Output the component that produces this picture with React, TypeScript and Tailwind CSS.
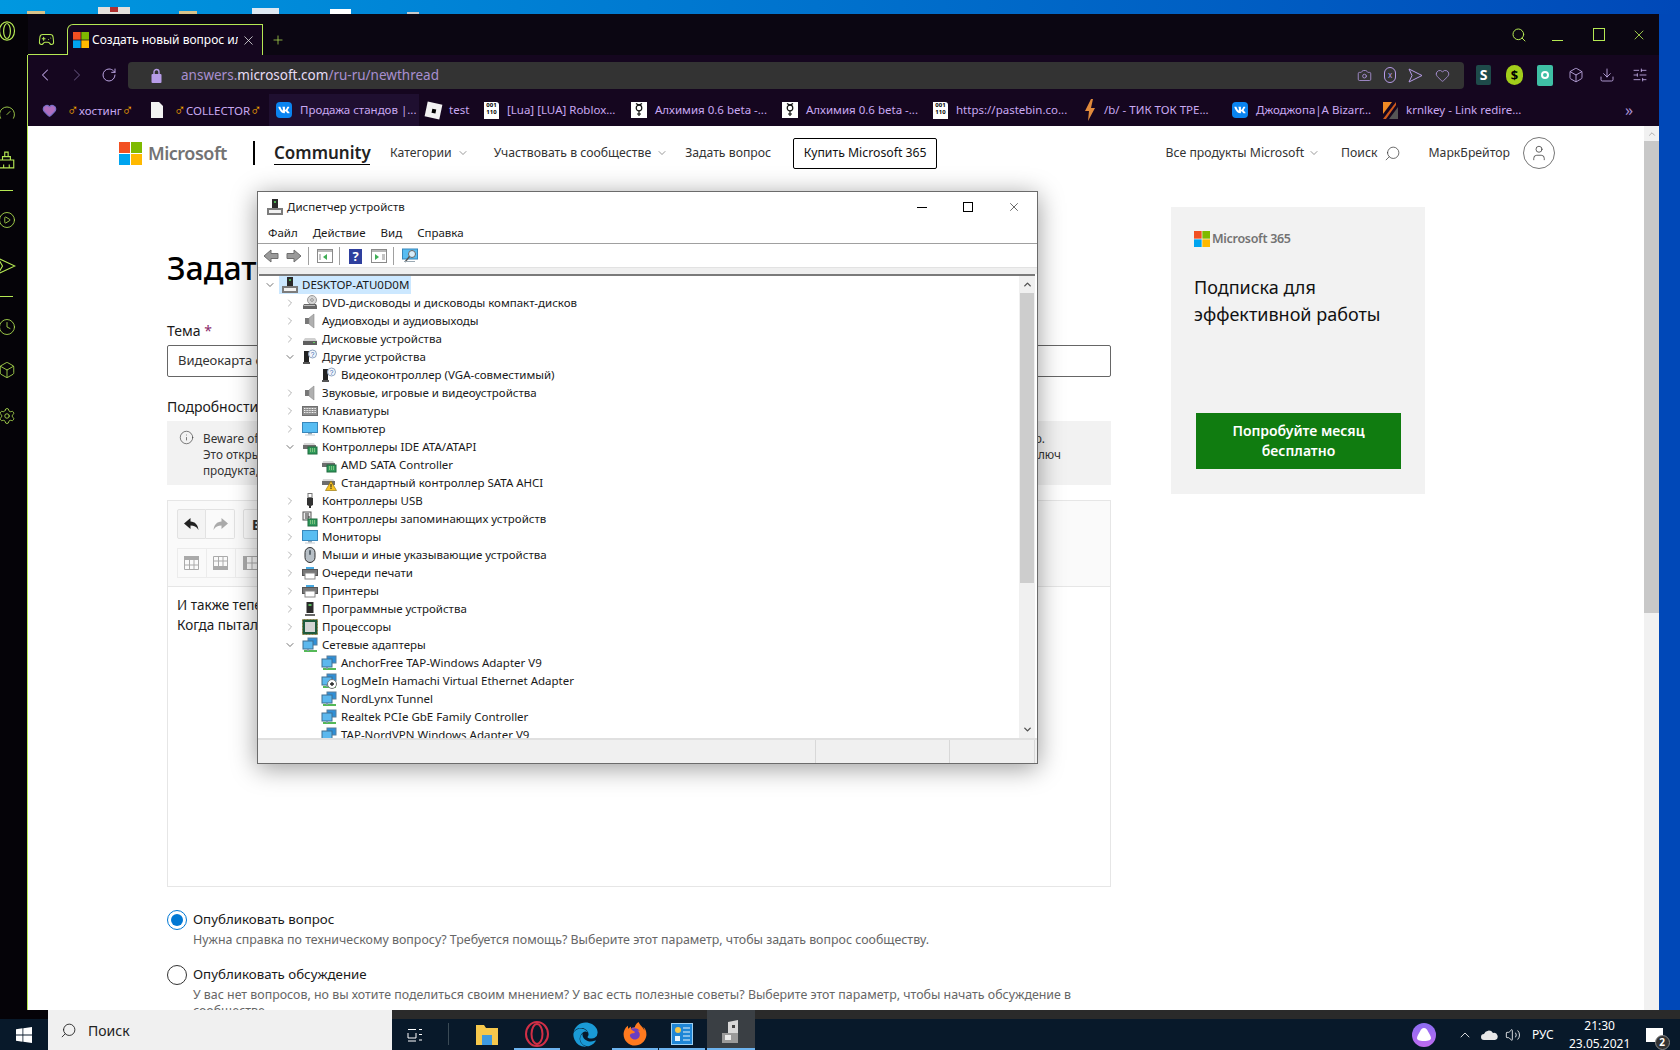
import React from 'react';
import { ChevronDown, ChevronLeft, ChevronRight, ChevronUp, Download, Gamepad2, Plus, RotateCw, Search, SlidersHorizontal, User, Volume2, X, Box, Camera, Heart, Info, Clock, Settings, Gauge, CirclePlay } from 'lucide-react';
import { FaEdge, FaFirefoxBrowser, FaVk } from 'react-icons/fa';

const MsLogo = ({ size }: { size: number }) => (
  <svg width={size} height={size} viewBox="0 0 23 23" className="shrink-0">
    <rect x="0" y="0" width="11" height="11" fill="#f25022" />
    <rect x="12" y="0" width="11" height="11" fill="#7fba00" />
    <rect x="0" y="12" width="11" height="11" fill="#00a4ef" />
    <rect x="12" y="12" width="11" height="11" fill="#ffb900" />
  </svg>
);

const DevIcon = ({ kind }: { kind: string }) => {
  const tower = (
    <>
      <rect x="5" y="0" width="6" height="9" fill="#2b2b2b" />
      <rect x="7" y="2" width="2" height="2" fill="#4caf50" />
      <path d="M0 9h16v7H0z" fill="#7c7c7c" />
      <rect x="2" y="11" width="12" height="3" fill="#f2f2f2" />
    </>
  );
  const unknown = (
    <>
      <rect x="2" y="2" width="5" height="11" fill="#222" />
      <rect x="1" y="13" width="7" height="2" fill="#555" />
      <circle cx="10.5" cy="5" r="4" fill="#f4f7fb" stroke="#8fa6c4" />
      <text x="10.5" y="7.5" fontSize="6.5" textAnchor="middle" fill="#2a62b0" fontFamily="Liberation Sans">?</text>
    </>
  );
  const drive = (
    <>
      <path d="M2 4h10l2 3H1z" fill="#d8d8d8" />
      <rect x="1" y="6" width="13" height="4" fill="#6d6d6d" />
    </>
  );
  const net = (
    <>
      <rect x="6" y="1" width="9" height="7" fill="#2f8fd6" stroke="#5a7f9c" />
      <rect x="1" y="4" width="10" height="8" fill="#5cb8ee" stroke="#3f6f91" />
      <rect x="2" y="13" width="13" height="2" fill="#55b957" />
      <rect x="5" y="12" width="2" height="2" fill="#7d9aa8" />
    </>
  );
  switch (kind) {
    case 'root':
      return <svg width="16" height="16" viewBox="0 0 16 16" className="shrink-0">{tower}</svg>;
    case 'dvd':
      return (
        <svg width="16" height="16" viewBox="0 0 16 16" className="shrink-0">
          <circle cx="10" cy="5" r="4.5" fill="#d6d6d6" stroke="#9a9a9a" />
          <circle cx="10" cy="5" r="1.3" fill="#fff" stroke="#888" />
          <path d="M2 9h12l1 2v3H1v-3z" fill="#666" />
          <rect x="2" y="10" width="11" height="1" fill="#bdbdbd" />
        </svg>
      );
    case 'audio':
      return (
        <svg width="16" height="16" viewBox="0 0 16 16" className="shrink-0">
          <rect x="3" y="5" width="4" height="6" fill="#777" />
          <path d="M7 5l5-4v14l-5-4z" fill="#b0b0b0" stroke="#8a8a8a" strokeWidth=".6" />
        </svg>
      );
    case 'disk':
      return (
        <svg width="16" height="16" viewBox="0 0 16 16" className="shrink-0">
          <path d="M3 7h10l2 3H1z" fill="#d0d0d0" />
          <rect x="1" y="10" width="14" height="4" fill="#5f5f5f" />
          <rect x="11" y="11" width="2" height="1" fill="#63d063" />
        </svg>
      );
    case 'unknown':
      return <svg width="16" height="16" viewBox="0 0 16 16" className="shrink-0">{unknown}</svg>;
    case 'keyboard':
      return (
        <svg width="16" height="16" viewBox="0 0 16 16" className="shrink-0">
          <rect x="0.5" y="3.5" width="15" height="9" fill="#8f8f8f" stroke="#6f6f6f" />
          <path d="M2 5.5h12M2 7.5h12M2 9.5h12" stroke="#f4f4f4" strokeDasharray="1 .6" />
        </svg>
      );
    case 'monitor':
      return (
        <svg width="16" height="16" viewBox="0 0 16 16" className="shrink-0">
          <rect x="0.5" y="1.5" width="15" height="10" fill="#58bdf2" stroke="#3887bb" />
          <rect x="6" y="12" width="4" height="1.5" fill="#9ba9b3" />
          <rect x="3" y="13.5" width="10" height="1" fill="#c2ccd3" />
        </svg>
      );
    case 'ide':
      return (
        <svg width="16" height="16" viewBox="0 0 16 16" className="shrink-0">
          {drive}
          <rect x="6" y="8" width="9" height="7" fill="#2f9a5b" stroke="#1f6a3e" />
          <path d="M8 10h5M8 12h5" stroke="#c9e8a0" strokeDasharray="1 1" />
        </svg>
      );
    case 'warn':
      return (
        <svg width="16" height="16" viewBox="0 0 16 16" className="shrink-0">
          {drive}
          <path d="M10 6l5.5 9.5h-11z" fill="#f7c325" stroke="#8a6a00" strokeWidth=".6" />
          <rect x="9.5" y="9" width="1" height="3.5" fill="#222" />
          <rect x="9.5" y="13" width="1" height="1" fill="#222" />
        </svg>
      );
    case 'usb':
      return (
        <svg width="16" height="16" viewBox="0 0 16 16" className="shrink-0">
          <rect x="6" y="0.5" width="4" height="4" fill="#fff" stroke="#777" />
          <path d="M5 5h6v7l-2 1v2H7v-2l-2-1z" fill="#333" />
        </svg>
      );
    case 'storage':
      return (
        <svg width="16" height="16" viewBox="0 0 16 16" className="shrink-0">
          <rect x="1" y="1" width="8" height="8" fill="#eee" stroke="#555" />
          <path d="M3 3h4M3 5h4v2H3" stroke="#333" fill="none" />
          <rect x="6" y="8" width="9" height="7" fill="#2f9a5b" stroke="#1f6a3e" />
          <path d="M8 10h5M8 12h5" stroke="#c9e8a0" strokeDasharray="1 1" />
        </svg>
      );
    case 'mouse':
      return (
        <svg width="16" height="16" viewBox="0 0 16 16" className="shrink-0">
          <rect x="3" y="0.5" width="10" height="15" rx="5" fill="#b7bfc6" stroke="#2f2f2f" />
          <rect x="7" y="3" width="2" height="5" rx="1" fill="#5c6870" />
        </svg>
      );
    case 'printer':
      return (
        <svg width="16" height="16" viewBox="0 0 16 16" className="shrink-0">
          <rect x="4" y="2" width="8" height="3" fill="#46a8e0" />
          <rect x="0.5" y="4.5" width="15" height="6" fill="#777" stroke="#555" />
          <rect x="3" y="8" width="10" height="6" fill="#fff" stroke="#888" />
        </svg>
      );
    case 'software':
      return (
        <svg width="16" height="16" viewBox="0 0 16 16" className="shrink-0">
          <rect x="4.5" y="1" width="7" height="11" fill="#2a2a2a" />
          <rect x="6.5" y="3" width="3" height="2" fill="#57b95c" />
          <rect x="3" y="13" width="10" height="2" fill="#666" />
        </svg>
      );
    case 'cpu':
      return (
        <svg width="16" height="16" viewBox="0 0 16 16" className="shrink-0">
          <rect x="0.5" y="0.5" width="15" height="15" fill="#1f5a3c" stroke="#8a7f40" strokeDasharray="1 .5" />
          <rect x="3" y="3" width="10" height="10" fill="#d4d4d4" />
        </svg>
      );
    case 'net':
      return <svg width="16" height="16" viewBox="0 0 16 16" className="shrink-0">{net}</svg>;
    case 'hamachi':
      return (
        <svg width="16" height="16" viewBox="0 0 16 16" className="shrink-0">
          {net}
          <circle cx="11" cy="11" r="4.5" fill="#fff" stroke="#777" />
          <path d="M9 11h4M11 9v4" stroke="#222" strokeWidth="1.3" />
        </svg>
      );
    default:
      return null;
  }
};

const treeRows = [
  { level: 1, open: false, icon: 'dvd', text: 'DVD-дисководы и дисководы компакт-дисков' },
  { level: 1, open: false, icon: 'audio', text: 'Аудиовходы и аудиовыходы' },
  { level: 1, open: false, icon: 'disk', text: 'Дисковые устройства' },
  { level: 1, open: true, icon: 'unknown', text: 'Другие устройства' },
  { level: 2, open: false, icon: 'unknown', text: 'Видеоконтроллер (VGA-совместимый)' },
  { level: 1, open: false, icon: 'audio', text: 'Звуковые, игровые и видеоустройства' },
  { level: 1, open: false, icon: 'keyboard', text: 'Клавиатуры' },
  { level: 1, open: false, icon: 'monitor', text: 'Компьютер' },
  { level: 1, open: true, icon: 'ide', text: 'Контроллеры IDE ATA/ATAPI' },
  { level: 2, open: false, icon: 'ide', text: 'AMD SATA Controller' },
  { level: 2, open: false, icon: 'warn', text: 'Стандартный контроллер SATA AHCI' },
  { level: 1, open: false, icon: 'usb', text: 'Контроллеры USB' },
  { level: 1, open: false, icon: 'storage', text: 'Контроллеры запоминающих устройств' },
  { level: 1, open: false, icon: 'monitor', text: 'Мониторы' },
  { level: 1, open: false, icon: 'mouse', text: 'Мыши и иные указывающие устройства' },
  { level: 1, open: false, icon: 'printer', text: 'Очереди печати' },
  { level: 1, open: false, icon: 'printer', text: 'Принтеры' },
  { level: 1, open: false, icon: 'software', text: 'Программные устройства' },
  { level: 1, open: false, icon: 'cpu', text: 'Процессоры' },
  { level: 1, open: true, icon: 'net', text: 'Сетевые адаптеры' },
  { level: 2, open: false, icon: 'net', text: 'AnchorFree TAP-Windows Adapter V9' },
  { level: 2, open: false, icon: 'hamachi', text: 'LogMeIn Hamachi Virtual Ethernet Adapter' },
  { level: 2, open: false, icon: 'net', text: 'NordLynx Tunnel' },
  { level: 2, open: false, icon: 'net', text: 'Realtek PCIe GbE Family Controller' },
  { level: 2, open: false, icon: 'net', text: 'TAP-NordVPN Windows Adapter V9' },
];

const DeviceManager = () => (
  <div className="absolute left-[257px] top-[191px] w-[781px] h-[573px] flex flex-col bg-white border border-[#6b6b6b] shadow-[0_4px_24px_rgba(0,0,0,0.4)] text-[11.5px] text-[#1a1a1a]">
    <div className="h-[30px] flex items-center shrink-0 pl-[9px]">
      <DevIcon kind="root" />
      <span className="ml-[4px]">Диспетчер устройств</span>
      <div className="ml-auto flex items-center h-full">
        <div className="w-[46px] flex justify-center"><div className="w-[10px] h-px bg-black" /></div>
        <div className="w-[46px] flex justify-center"><div className="w-[10px] h-[10px] border border-black" /></div>
        <div className="w-[46px] flex justify-center"><X size={14} strokeWidth={1} color="#000" /></div>
      </div>
    </div>
    <div className="h-[22px] flex items-center gap-[15px] pl-[10px] shrink-0 border-b border-[#a0a0a0]">
      <span>Файл</span>
      <span>Действие</span>
      <span>Вид</span>
      <span>Справка</span>
    </div>
    <div className="h-[23px] flex items-center shrink-0 pl-[5px] pt-px">
      <svg width="16" height="14" viewBox="0 0 16 14"><path d="M8 1L1 7l7 6V9.5h7v-5H8z" fill="#9a9a9a" stroke="#6e6e6e" /></svg>
      <svg width="16" height="14" viewBox="0 0 16 14" className="ml-[7px]"><path d="M8 1l7 6-7 6V9.5H1v-5h7z" fill="#9a9a9a" stroke="#6e6e6e" /></svg>
      <div className="w-px h-[18px] bg-[#a0a0a0] ml-[6px]" />
      <svg width="16" height="14" viewBox="0 0 16 14" className="ml-[8px]"><rect x=".5" y=".5" width="15" height="13" fill="#fff" stroke="#8a8a8a" /><rect x="1" y="1" width="14" height="2" fill="#b8b8b8" /><path d="M10 5L6 8l4 3z" fill="#3fae55" /><path d="M2 6h2M2 8h2M2 10h2" stroke="#888" /></svg>
      <div className="w-px h-[18px] bg-[#a0a0a0] ml-[6px]" />
      <div className="ml-[9px] w-[13px] h-[15px] bg-[#2e3f9e] flex items-center justify-center text-white text-[13px] font-bold leading-none">?</div>
      <svg width="16" height="14" viewBox="0 0 16 14" className="ml-[9px]"><rect x=".5" y=".5" width="15" height="13" fill="#fff" stroke="#8a8a8a" /><rect x="1" y="1" width="14" height="2" fill="#b8b8b8" /><path d="M4 5l4 3-4 3z" fill="#3fae55" /><path d="M11 6h3M11 8h3M11 10h3" stroke="#888" /></svg>
      <div className="w-px h-[18px] bg-[#a0a0a0] ml-[6px]" />
      <svg width="16" height="16" viewBox="0 0 16 16" className="ml-[8px]"><rect x=".5" y="1" width="15" height="10" fill="#58bdf2" stroke="#3887bb" /><circle cx="10" cy="6" r="3.5" fill="#d8eefb" stroke="#666" /><path d="M7.5 8.5L3 14" stroke="#555" strokeWidth="1.4" /><rect x="2" y="13" width="11" height="1" fill="#9ba9b3" /></svg>
    </div>
    <div className="h-[7px] shrink-0 bg-[#efefef] border-t border-[#e2e2e2]" />
    <div className="flex-1 min-h-0 flex ml-px mr-[2px] border-t-2 border-[#7a7a7a] overflow-hidden">
      <div className="flex-1 overflow-hidden">
        <div className="h-[18px] flex items-center pl-[5px]">
          <ChevronDown size={12} strokeWidth={1.5} color="#444" />
          <div className="ml-[3px] h-[18px] w-[132px] bg-[#cce8ff] flex items-center pl-[3px]">
            <DevIcon kind="root" />
            <span className="ml-[4px] whitespace-nowrap">DESKTOP-ATU0D0M</span>
          </div>
        </div>
        {treeRows.map((row) => (
          <div key={row.text} className={row.level === 2 ? 'h-[18px] flex items-center pl-[62px]' : 'h-[18px] flex items-center pl-[25px]'}>
            {row.level === 1 && (row.open
              ? <ChevronDown size={12} strokeWidth={1.5} color="#444" />
              : <ChevronRight size={12} strokeWidth={1.5} color="#999" />)}
            {row.level === 1 && <div className="w-[6px]" />}
            <DevIcon kind={row.icon} />
            <span className="ml-[4px] whitespace-nowrap">{row.text}</span>
          </div>
        ))}
      </div>
      <div className="w-[16px] shrink-0 bg-[#f0f0f0] flex flex-col">
        <div className="h-[17px] flex items-center justify-center"><ChevronUp size={11} strokeWidth={3} color="#505050" /></div>
        <div className="h-[290px] mx-px bg-[#cdcdcd]" />
        <div className="mt-auto h-[17px] flex items-center justify-center"><ChevronDown size={11} strokeWidth={3} color="#505050" /></div>
      </div>
    </div>
    <div className="h-[25px] shrink-0 bg-[#f0f0f0] border-t-2 border-[#e0e0e0] flex">
      <div className="w-[558px] border-r border-[#d8d8d8]" />
      <div className="w-[134px] border-r border-[#d8d8d8]" />
      <div className="w-[85px] border-r border-[#d8d8d8]" />
    </div>
  </div>
);

const Vk = () => (
  <div className="w-[16px] h-[16px] rounded-[4px] bg-[#0a84f0] flex items-center justify-center text-white shrink-0">
    <FaVk size={12} />
  </div>
);

const Alch = () => (
  <div className="w-[16px] h-[16px] bg-white flex items-center justify-center shrink-0">
    <svg width="10" height="14" viewBox="0 0 10 14" fill="none" stroke="#111" strokeWidth="1.2">
      <circle cx="5" cy="5" r="2.8" /><path d="M2 .5q3 2.5 6 0M5 8v5M3 11h4" />
    </svg>
  </div>
);

const Bin = () => (
  <div className="w-[15px] h-[17px] bg-white text-[6px] leading-[7px] text-black font-bold text-center shrink-0 rounded-tr-[3px]">
    001<br />110
  </div>
);

const Mars = () => <span className="text-[#f5a800] font-bold text-[16px] leading-none">♂</span>;

const bookmarkText = 'text-[#c9a9f2] whitespace-nowrap ml-[8px]';

const Bookmarks = () => (
  <div className="h-[32px] flex items-center bg-[#15061f] text-[11.5px] pl-[14px] shrink-0">
    <Heart size={15} fill="#b06fc0" color="#7a6fc8" className="w-[15px] shrink-0" />
    <div className="ml-[10px] w-[68px] whitespace-nowrap text-[#c9a9f2]"><Mars />хостинг<Mars /></div>
    <svg width="12" height="16" viewBox="0 0 12 16" className="ml-[16px] shrink-0"><path d="M0 0h8l4 4v12H0z" fill="#f2f2f2" /></svg>
    <div className="ml-[11px] w-[93px] whitespace-nowrap text-[#c9a9f2]"><Mars />COLLECTOR<Mars /></div>
    <div className="w-[150px] h-[32px] bg-[#1f0f30] flex items-center pl-[7px] ml-[2px]">
      <Vk />
      <span className={bookmarkText}>Продажа стандов |...</span>
    </div>
    <div className="w-[15px] h-[15px] bg-[#f2f2f2] rotate-12 ml-[7px] flex items-center justify-center shrink-0"><div className="w-[4px] h-[4px] bg-black" /></div>
    <span className={bookmarkText + ' w-[27px]'}>test</span>
    <div className="w-[15px] ml-[8px] shrink-0"><Bin /></div>
    <span className={bookmarkText + ' w-[124px]'}>[Lua] [LUA] Roblox...</span>
    <Alch />
    <span className={bookmarkText + ' w-[127px]'}>Алхимия 0.6 beta -...</span>
    <Alch />
    <span className={bookmarkText + ' w-[127px]'}>Алхимия 0.6 beta -...</span>
    <Bin />
    <span className={bookmarkText + ' w-[128px]'}>https://pastebin.co...</span>
    <svg width="12" height="22" viewBox="0 0 12 22" className="shrink-0"><path d="M7 0L1 12h4l-1 10 7-13H7l2-9z" fill="#e08a3c" /></svg>
    <span className={bookmarkText + ' w-[128px]'}>/b/ - ТИК ТОК ТРЕ...</span>
    <Vk />
    <span className={bookmarkText + ' w-[127px]'}>Джоджопа|A Bizarr...</span>
    <svg width="15" height="17" viewBox="0 0 15 17" className="shrink-0"><path d="M0 0h9L0 12z" fill="#f08a24" /><path d="M13 0v3L3 17H0z" fill="#d05a1c" /><path d="M6 17l9-12v12z" fill="#555" /></svg>
    <span className={bookmarkText + ' w-[219px]'}>krnlkey - Link redire...</span>
    <span className="text-[#a88fd0] text-[16px] leading-none">»</span>
  </div>
);

const AddressBar = () => (
  <div className="h-[39px] flex items-center bg-[#15061f] shrink-0 pt-px">
    <ChevronLeft size={20} strokeWidth={1.25} color="#b9a2e0" className="ml-[7px]" />
    <ChevronRight size={20} strokeWidth={1.25} color="#5b4a72" className="ml-[12px]" />
    <RotateCw size={16} strokeWidth={1.5} color="#b9a2e0" className="ml-[14px]" />
    <div className="ml-[11px] w-[1336px] h-[27px] rounded-[4px] bg-[#333] flex items-center">
      <svg width="11" height="15" viewBox="0 0 11 15" className="ml-[23px] shrink-0"><path d="M3 7V4a2.5 2.5 0 015 0v3" fill="none" stroke="#b79ce8" strokeWidth="1.4" /><rect x="0.5" y="6" width="10" height="9" rx="1" fill="#b79ce8" /></svg>
      <div className="ml-[19px] text-[13.5px] text-[#a88fd0] whitespace-nowrap">
        answers.<span className="text-[#e6dcf5]">microsoft.com</span>/ru-ru/newthread
      </div>
      <div className="ml-auto flex items-center gap-[12px] pr-[14px]">
        <Camera size={15} strokeWidth={1.25} color="#b79ce8" />
        <div className="w-[12px] h-[16px] rounded-[6px] border border-[#b79ce8] text-[#b79ce8] text-[8px] flex items-center justify-center leading-none">x</div>
        <svg width="15" height="15" viewBox="0 0 15 15" fill="none" stroke="#b79ce8"><path d="M1 1l13 6.5L1 14l3-6.5z" /></svg>
        <Heart size={15} strokeWidth={1.25} color="#b79ce8" />
      </div>
    </div>
    <div className="ml-[12px] w-[15px] h-[20px] rounded-[2px] bg-[#1e4a4a] text-white text-[14px] font-bold flex items-center justify-center leading-none">S</div>
    <div className="ml-[15px] w-[17px] h-[20px] rounded-full bg-[#a2cd1b] text-black text-[13px] font-bold flex items-center justify-center leading-none">$</div>
    <div className="ml-[14px] w-[16px] h-[21px] rounded-[2px] bg-[#3fbfa5] flex items-center justify-center"><div className="w-[8px] h-[8px] rounded-full border-2 border-white" /></div>
    <Box size={16} strokeWidth={1.25} color="#c9b3ee" className="ml-[15px]" />
    <Download size={16} strokeWidth={1.25} color="#c9b3ee" className="ml-[15px]" />
    <SlidersHorizontal size={16} strokeWidth={1.25} color="#c9b3ee" className="ml-[17px]" />
  </div>
);

const TabRow = () => (
  <div className="h-[41px] flex items-end bg-[#0b0612] shrink-0">
    <div className="w-[28px] h-full shrink-0 bg-[#050308] flex items-start pt-[7px]">
      <svg width="16" height="20" viewBox="0 0 16 20" fill="none" stroke="#b5e853" strokeWidth="1.2">
        <ellipse cx="7" cy="10" rx="7.5" ry="9.2" />
        <ellipse cx="7" cy="10" rx="3.4" ry="7.5" />
      </svg>
    </div>
    <div className="w-[39px] h-full shrink-0 border-b border-[#b5e853] flex items-center pl-[10px]">
      <Gamepad2 size={17} strokeWidth={1.5} color="#b5e853" className="mt-[11px]" />
    </div>
    <div className="w-[196px] h-[31px] shrink-0 bg-[#15061f] border border-b-0 border-[#b5e853] rounded-tl-[6px] flex items-center pl-[5px]">
      <MsLogo size={16} />
      <span className="ml-[3px] w-[146px] overflow-hidden whitespace-nowrap text-[12px] text-white">Создать новый вопрос или</span>
      <X size={15} strokeWidth={1.25} color="#e8e8e8" className="ml-[3px]" />
    </div>
    <Plus size={14} strokeWidth={1.25} color="#b5e853" className="ml-[8px] mb-[8px]" />
    <div className="ml-auto flex items-center h-full pr-[12px]">
      <Search size={16} strokeWidth={1.5} color="#b5e853" />
      <div className="ml-[25px] w-[11px] h-px bg-[#b5e853] mt-[11px]" />
      <div className="ml-[30px] w-[12px] h-[13px] border border-[#b5e853]" />
      <X size={16} strokeWidth={1.25} color="#b5e853" className="ml-[26px]" />
    </div>
  </div>
);

const Sidebar = () => (
  <div className="w-[28px] shrink-0 border-r border-[#b5e853] bg-[#050308] flex flex-col items-start text-[#b5e853]">
    <Gauge size={18} strokeWidth={1.1} className="-ml-[2px] mt-[49px]" />
    <svg width="18" height="18" viewBox="0 0 16 16" fill="none" stroke="currentColor" className="mt-[29px] -ml-[2px]"><path d="M1 8h13v7H1zM4 8V5h7v3M6 5V1h3v4M5 15v-3M10 15v-3" /></svg>
    <div className="w-[13px] h-px bg-[#b5e853] mt-[21px]" />
    <CirclePlay size={18} strokeWidth={1.1} className="mt-[20px] -ml-[2px]" />
    <svg width="18" height="18" viewBox="0 0 16 16" fill="none" stroke="currentColor" className="mt-[28px] -ml-[2px]"><path d="M0 1l15 7-15 7 4-7z" /></svg>
    <div className="w-[13px] h-px bg-[#b5e853] mt-[21px]" />
    <Clock size={18} strokeWidth={1.1} className="mt-[21px] -ml-[2px]" />
    <Box size={18} strokeWidth={1.1} className="mt-[25px] -ml-[2px]" />
    <Settings size={18} strokeWidth={1.1} className="mt-[28px] -ml-[2px]" />
  </div>
);

const TableIcon = ({ variant }: { variant: number }) => (
  <svg width="16" height="14" viewBox="0 0 16 14">
    {variant === 0 && <rect x="0" y="0" width="15" height="4" fill="#aaa" />}
    {variant === 1 && <rect x="0" y="10" width="15" height="4" fill="#aaa" />}
    {variant === 2 && <rect x="0" y="0" width="4" height="14" fill="#aaa" />}
    <path d={variant === 0 ? 'M.5 4v9.5h14V4M5.5 4v9.5M10 4v9.5M.5 9h14' : variant === 1 ? 'M.5 10V.5h14V10M5.5 .5V10M10 .5V10M.5 5h14' : 'M4 .5h10.5v13H4M9 .5v13M4 7h10'} fill="none" stroke="#aaa" />
  </svg>
);

const ReplyArrow = ({ color, flip }: { color: string; flip?: boolean }) => (
  <svg width="15" height="13" viewBox="0 0 15 13" className={flip ? '-scale-x-100' : ''}>
    <path d="M6.5 0L0 5.5 6.5 11V7.5c3.5 0 6 1 8 4.5C14 7 11 3.5 6.5 3.5z" fill={color} />
  </svg>
);

const Page = () => (
  <div className="flex-1 min-h-0 flex bg-white">
    <div className="flex-1 overflow-hidden text-[#1a1a1a]">
      <div className="h-[54px] flex items-center text-[12.25px] text-[#333]">
        <div className="ml-[91px]"><MsLogo size={23} /></div>
        <span className="ml-[6px] text-[18px] font-semibold text-[#737373] w-[80px] tracking-[-0.5px]">Microsoft</span>
        <div className="ml-[25px] w-[2px] h-[24px] bg-black" />
        <span className="ml-[19px] w-[96px] text-[17px] font-semibold text-[#222] border-b border-black leading-[22px] whitespace-nowrap">Community</span>
        <span className="ml-[20px]">Категории</span>
        <ChevronDown size={12} strokeWidth={1} className="ml-[5px]" />
        <span className="ml-[25px]">Участвовать в сообществе</span>
        <ChevronDown size={12} strokeWidth={1} className="ml-[5px]" />
        <span className="ml-[17px]">Задать вопрос</span>
        <div className="ml-[22px] w-[144px] h-[31px] border border-black rounded-[2px] flex items-center justify-center text-[#111]">Купить Microsoft 365</div>
        <div className="ml-auto flex items-center pr-[89px]">
          <span>Все продукты Microsoft</span>
          <ChevronDown size={12} strokeWidth={1} className="ml-[4px]" />
          <span className="ml-[21px]">Поиск</span>
          <Search size={17} strokeWidth={1} className="ml-[6px] -scale-x-100" />
          <span className="ml-[28px]">МаркБрейтор</span>
          <div className="ml-[13px] w-[32px] h-[32px] rounded-full border border-[#777] flex items-center justify-center"><User size={18} strokeWidth={1} /></div>
        </div>
      </div>
      <div className="flex">
        <div className="ml-[139px] w-[944px] shrink-0">
          <h1 className="mt-[68px] h-[40px] text-[32px] leading-[40px] font-medium text-black">Задать вопрос</h1>
          <div className="mt-[33px] h-[20px] text-[14px] leading-[20px]">Тема <span className="text-[#8a2a6a]">*</span></div>
          <div className="mt-[4px] h-[32px] border border-[#666] rounded-[2px] flex items-center pl-[10px] text-[13px] text-[#333]">Видеокарта с</div>
          <div className="mt-[20px] h-[20px] text-[14px] leading-[20px]">Подробности</div>
          <div className="mt-[4px] h-[64px] bg-[#f2f2f2] flex pt-[9px] pl-[12px] text-[11.75px] text-[#333] pr-[50px]">
            <Info size={15} strokeWidth={1} className="shrink-0" />
            <div className="ml-[9px] flex-1 leading-[16px]">
              <div className="flex justify-between pr-[16px]"><span>Beware of</span><span>р.</span></div>
              <div className="flex justify-between"><span>Это откры</span><span>ключ</span></div>
              <div>продукта,</div>
            </div>
          </div>
          <div className="mt-[15px] h-[387px] border border-[#e6e6e6]">
            <div className="h-[86px] bg-[#fafafa] border-b border-[#e6e6e6] pt-[8px] pl-[9px]">
              <div className="flex h-[30px]">
                <div className="w-[29px] border border-[#e2e2e2] bg-[#f4f4f4] rounded-l-[2px] flex items-center justify-center"><ReplyArrow color="#222" /></div>
                <div className="w-[29px] border border-l-0 border-[#e2e2e2] rounded-r-[2px] flex items-center justify-center"><ReplyArrow color="#aaa" flip /></div>
                <div className="ml-[8px] w-[40px] border border-[#e2e2e2] rounded-[2px] flex items-center pl-[8px] text-[14px] font-bold text-[#333]">B</div>
              </div>
              <div className="flex h-[30px] mt-[9px] border border-r-0 border-[#ececec] w-[100px]">
                <div className="w-[29px] border-r border-[#ececec] flex items-center justify-center"><TableIcon variant={0} /></div>
                <div className="w-[29px] border-r border-[#ececec] flex items-center justify-center"><TableIcon variant={1} /></div>
                <div className="w-[29px] flex items-center justify-center"><TableIcon variant={2} /></div>
              </div>
            </div>
            <div className="pt-[8px] pl-[9px] text-[13.5px] leading-[20px]">
              <div className="h-[20px]">И также теперь</div>
              <div className="h-[20px]">Когда пытался</div>
            </div>
          </div>
          <div className="mt-[23px] flex items-center h-[20px]">
            <div className="w-[20px] h-[20px] rounded-full border border-[#0078d4] flex items-center justify-center shrink-0"><div className="w-[12px] h-[12px] rounded-full bg-[#0078d4]" /></div>
            <span className="ml-[6px] text-[13.3px]">Опубликовать вопрос</span>
          </div>
          <div className="ml-[26px] h-[20px] text-[12.4px] leading-[20px] text-[#666] whitespace-nowrap">Нужна справка по техническому вопросу? Требуется помощь? Выберите этот параметр, чтобы задать вопрос сообществу.</div>
          <div className="mt-[15px] flex items-center h-[20px]">
            <div className="w-[20px] h-[20px] rounded-full border border-[#333] shrink-0" />
            <span className="ml-[6px] text-[13.3px]">Опубликовать обсуждение</span>
          </div>
          <div className="ml-[26px] text-[12.4px] leading-[16px] mt-[2px] text-[#666]">У вас нет вопросов, но вы хотите поделиться своим мнением? У вас есть полезные советы? Выберите этот параметр, чтобы начать обсуждение в сообществе.</div>
        </div>
        <div className="ml-[60px] mt-[27px] w-[254px] h-[287px] bg-[#f2f2f2] shrink-0 flex flex-col pl-[23px]">
          <div className="mt-[24px] flex items-center h-[16px]">
            <MsLogo size={16} />
            <span className="ml-[2px] text-[12.5px] font-semibold text-[#737373] tracking-[-0.3px]">Microsoft 365</span>
          </div>
          <div className="mt-[27px] text-[18px] leading-[27px] text-[#111]">Подписка для<br />эффективной работы</div>
          <div className="mt-[85px] ml-[2px] w-[205px] h-[56px] bg-[#107c10] text-white text-[14px] font-semibold leading-[20px] text-center flex items-center justify-center">Попробуйте месяц<br />бесплатно</div>
        </div>
      </div>
    </div>
    <div className="w-[15px] shrink-0 bg-[#f1f1f1] flex flex-col">
      <div className="h-[15px] flex items-center justify-center"><ChevronUp size={10} strokeWidth={2} color="#a0a0a0" /></div>
      <div className="h-[472px] bg-[#c8c8c8]" />
    </div>
  </div>
);

const Taskbar = () => (
  <div className="h-[40px] shrink-0 flex bg-[linear-gradient(to_bottom,#2a2a2a_9px,#08192a_9px)] text-white">
    <div className="w-[48px] shrink-0 bg-[linear-gradient(to_bottom,#050308_9px,#08192a_9px)] flex items-center justify-center pt-[9px]">
      <svg width="16" height="16" viewBox="0 0 16 16" fill="#fff"><path d="M0 2.2l6.5-.9v6.2H0zM7.3 1.2L16 0v7.5H7.3zM0 8.4h6.5v6.3L0 13.8zM7.3 8.4H16V16l-8.7-1.2z" /></svg>
    </div>
    <div className="w-[344px] shrink-0 bg-[#f0f0f0] flex items-center text-[#222] text-[14px] pl-[12px]">
      <Search size={17} strokeWidth={1.25} className="-scale-x-100" />
      <span className="ml-[11px]">Поиск</span>
    </div>
    <div className="w-[46px] flex items-center justify-center pt-[9px]">
      <svg width="16" height="16" viewBox="0 0 16 16" fill="none" stroke="#fff"><path d="M1 2.5h8M1 6v5h8V6M1 14h8M12 2.5h3M12 7.5h3M12 13h3" /></svg>
    </div>
    <div className="w-px h-[22px] bg-[#3a4a55] mt-[13px] ml-[10px]" />
    <div className="ml-[15px] w-[46px] flex items-center justify-center pt-[9px]">
      <svg width="24" height="22" viewBox="0 0 24 22"><path d="M1 1h8l2 3h12v17H1z" fill="#f6c84c" /><rect x="7" y="11" width="10" height="10" fill="#3e9ae0" /></svg>
    </div>
    <div className="ml-[4px] w-[46px] flex items-center justify-center pt-[9px] border-b-2 border-[#6db3ee]">
      <svg width="24" height="26" viewBox="0 0 24 26" fill="none" stroke="#d12f46" strokeWidth="2"><ellipse cx="12" cy="13" rx="11" ry="12" /><ellipse cx="12" cy="13" rx="5.5" ry="10" /></svg>
    </div>
    <div className="ml-[2px] w-[46px] flex items-center justify-center pt-[9px] text-[#1a9ad6]">
      <FaEdge size={25} />
    </div>
    <div className="ml-[4px] w-[46px] flex items-center justify-center pt-[9px] border-b-2 border-[#6db3ee]">
      <div className="relative w-[24px] h-[24px] flex items-center justify-center">
        <div className="w-[14px] h-[14px] rounded-full bg-[#6a3ec2]" />
        <FaFirefoxBrowser size={24} className="absolute inset-0 text-[#ff7a1f]" />
      </div>
    </div>
    <div className="ml-[1px] w-[46px] flex items-center justify-center pt-[9px] border-b-2 border-[#6db3ee]">
      <svg width="22" height="22" viewBox="0 0 22 22"><rect x=".5" y=".5" width="21" height="21" fill="#1f86d6" stroke="#9ed0f2" /><circle cx="7" cy="7" r="3" fill="#f6c84c" /><path d="M4 13h5v5H4z" fill="#e8f4fc" /><path d="M12 5h7M12 9h7M12 13h7M12 17h7" stroke="#e8f4fc" /></svg>
    </div>
    <div className="ml-[2px] w-[48px] bg-[#3a3f44] flex items-center justify-center pt-[5px] border-b-2 border-[#6db3ee]">
      <svg width="24" height="26" viewBox="0 0 24 26"><path d="M9 3l10-2v15l-10 2z" fill="#d8d8d8" /><rect x="13" y="6" width="3" height="3" fill="#444" /><path d="M3 14h16v10H3z" fill="#9a9a9a" /><rect x="6" y="16" width="6" height="5" fill="#ececec" /></svg>
    </div>
    <div className="ml-[657px] flex items-center pt-[9px] h-full">
      <div className="w-[24px] h-[24px] rounded-full bg-[linear-gradient(to_bottom,#8a6cf2,#c06cf0)] flex items-center justify-center">
        <svg width="14" height="13" viewBox="0 0 14 13"><path d="M7 0c2 0 3 1.5 4 3.5 1 2 3 4.5 3 6.5 0 2-2 3-7 3s-7-1-7-3c0-2 2-4.5 3-6.5C4 1.5 5 0 7 0z" fill="#fff" /></svg>
      </div>
      <ChevronUp size={16} strokeWidth={1.25} className="ml-[21px]" />
      <svg width="17" height="10" viewBox="0 0 17 10" className="ml-[8px]"><path d="M3 10a3 3 0 010-6 5 5 0 019-1 3.5 3.5 0 012 7z" fill="#e8e8e8" /></svg>
      <Volume2 size={16} strokeWidth={1.25} className="ml-[7px]" />
      <span className="ml-[11px] text-[12px]">РУС</span>
      <div className="ml-[14px] w-[64px] text-center text-[12px] leading-[18px]">21:30<br />23.05.2021</div>
      <div className="relative ml-[14px] w-[17px] h-[14px] bg-white">
        <div className="absolute left-[9px] top-[7px] w-[15px] h-[15px] rounded-full bg-[#333] border border-[#888] text-[10px] font-bold flex items-center justify-center leading-none">2</div>
      </div>
    </div>
  </div>
);

const App: React.FC = () => {
  return (
    <div className="relative w-[1680px] h-[1050px] overflow-hidden flex flex-col font-['Noto_Sans',sans-serif] bg-[#0048b8]">
      <div className="h-[14px] shrink-0 flex items-end bg-gradient-to-r from-[#0098e0] to-[#0048b8] overflow-hidden">
        <div className="ml-[27px] w-[18px] h-[3px] bg-[#d8c28a]" />
        <div className="ml-[53px] w-[32px] h-[7px] bg-[#e4e0dc] flex justify-center"><div className="w-[8px] h-[5px] bg-[#b03030]" /></div>
        <div className="ml-[49px] w-[18px] h-[3px] bg-[#d8c28a]" />
        <div className="ml-[55px] w-[27px] h-[6px] bg-[#dfe8f2]" />
        <div className="ml-[51px] w-[21px] h-[5px] bg-white" />
        <div className="ml-[56px] w-[12px] h-[2px] bg-[#c8c8c8]" />
      </div>
      <div className="flex-1 min-h-0 flex">
        <div className="w-[1659px] shrink-0 flex flex-col bg-[#050308]">
          <TabRow />
          <div className="flex-1 min-h-0 flex">
            <Sidebar />
            <div className="flex-1 min-w-0 flex flex-col">
              <AddressBar />
              <Bookmarks />
              <Page />
            </div>
          </div>
        </div>
      </div>
      <Taskbar />
      <DeviceManager />
    </div>
  );
};

export default App;
